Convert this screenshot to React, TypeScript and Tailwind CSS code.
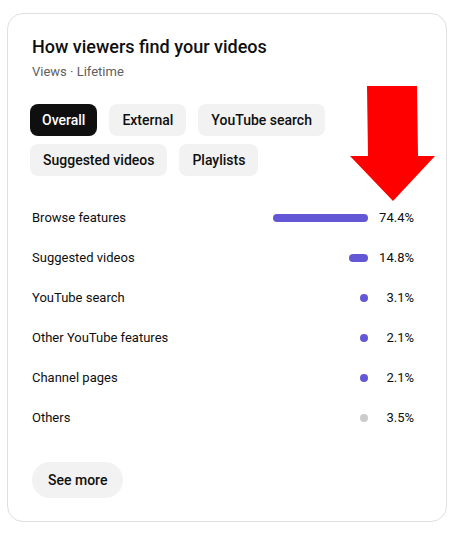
const chips = ['Overall', 'External', 'YouTube search', 'Suggested videos', 'Playlists']

const sources = [
  { label: 'Browse features', pct: 74.4 },
  { label: 'Suggested videos', pct: 14.8 },
  { label: 'YouTube search', pct: 3.1 },
  { label: 'Other YouTube features', pct: 2.1 },
  { label: 'Channel pages', pct: 2.1 },
  { label: 'Others', pct: 3.5, muted: true },
]

export default function App() {
  return (
    <div className="relative w-[457px] h-[533px] bg-white pt-[13px] px-[7px]" style={{ fontFamily: 'Roboto, "Liberation Sans", sans-serif' }}>
      <div className="w-[440px] rounded-2xl border border-[#e0e0e0] bg-white pt-[21px] pb-[23px] pl-[24px] pr-[32px]">
        <h2 className="text-[18px] leading-6 font-medium text-[#0f0f0f]">How viewers find your videos</h2>
        <p className="mt-[4px] text-[13px] leading-[18px] text-[#606060]">Views · Lifetime</p>

        <div className="mt-[23px] -ml-[2px] flex flex-wrap gap-x-3 gap-y-2">
          {chips.map((c, i) => (
            <button
              key={c}
              className={
                i === 0
                  ? 'h-8 px-3 rounded-lg bg-[#0f0f0f] text-white text-sm font-medium'
                  : 'h-8 px-[13px] rounded-lg bg-[#f2f2f2] text-[#0f0f0f] text-sm font-medium'
              }
            >
              {c}
            </button>
          ))}
        </div>

        <div className="mt-[22px]">
          {sources.map((s) => (
            <div key={s.label} className="flex items-center h-10 text-[13px] text-[#0f0f0f]">
              <span className="flex-1">{s.label}</span>
              <div className="w-[128px] flex justify-end">
                <div
                  className={s.muted ? 'h-2 rounded-full bg-[#cccccc]' : 'h-2 rounded-full bg-[#6457d6]'}
                  style={{ width: Math.max(8, Math.round((s.pct / 100) * 128)) }}
                />
              </div>
              <span className="w-[46px] text-right">{s.pct}%</span>
            </div>
          ))}
        </div>

        <button className="mt-[24px] h-9 px-4 rounded-full bg-[#f2f2f2] text-sm font-medium text-[#0f0f0f]">
          See more
        </button>
      </div>

      <svg className="absolute left-0 top-0 pointer-events-none" width="457" height="533">
        <polygon points="367,86 417,86 418,156 435,156 393,201 350,156 368,156" fill="#ff0000" />
      </svg>
    </div>
  )
}
